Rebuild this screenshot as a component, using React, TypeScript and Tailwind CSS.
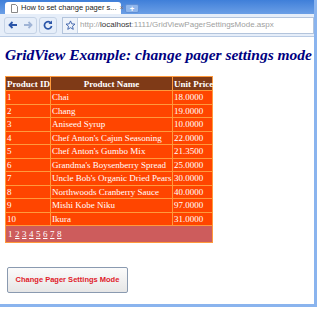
import { FC } from 'react';

type Product = {
	id: number,
	name: string,
	price: string
}

const products: Product[] = [
	{ id: 1, name: 'Chai', price: '18.0000' },
	{ id: 2, name: 'Chang', price: '19.0000' },
	{ id: 3, name: 'Aniseed Syrup', price: '10.0000' },
	{ id: 4, name: "Chef Anton's Cajun Seasoning", price: '22.0000' },
	{ id: 5, name: "Chef Anton's Gumbo Mix", price: '21.3500' },
	{ id: 6, name: "Grandma's Boysenberry Spread", price: '25.0000' },
	{ id: 7, name: "Uncle Bob's Organic Dried Pears", price: '30.0000' },
	{ id: 8, name: 'Northwoods Cranberry Sauce', price: '40.0000' },
	{ id: 9, name: 'Mishi Kobe Niku', price: '97.0000' },
	{ id: 10, name: 'Ikura', price: '31.0000' },
]

const serif = "font-['Liberation_Serif','Times_New_Roman',serif]"
const sans = "font-['Liberation_Sans',Arial,sans-serif]"

const BrowserChrome: FC = () => {
	return (
		<div className="flex flex-col">
			{/* tab strip */}
			<div className="h-[14px] bg-gradient-to-b from-[#3f7fd9] to-[#6b9fe6] flex items-end pl-[5px]">
				<div className="h-[12px] w-[116px] bg-white rounded-t-[3px] flex items-center gap-[3px] px-[6px]">
					<svg width="7" height="9" viewBox="0 0 7 9" className="shrink-0">
						<path d="M0.5 0.5h4l2 2v6h-6z" fill="#fff" stroke="#888" />
					</svg>
					<span className={`${sans} text-[7.5px] text-[#222] leading-none whitespace-nowrap`}>How to set change pager s...</span>
					<span className={`${sans} text-[8px] text-[#777] leading-none ml-auto`}>×</span>
				</div>
				<div className="ml-[4px] mb-[1px] w-[14px] h-[9px] bg-[#8fb6ec] rounded-[2px] border border-[#5f8fd6] flex items-center justify-center text-[8px] leading-none text-white font-bold">+</div>
			</div>
			{/* toolbar */}
			<div className="h-[23px] bg-[#e6eef9] border-b border-[#b9cbe4] flex items-center pl-[4px] gap-[2px]">
				<div className="w-[33px] h-[17px] rounded-[3px] border border-[#c5d3e6] flex items-center justify-around">
					<svg width="10" height="8" viewBox="0 0 10 8"><path d="M9 4H2M4.5 1L1.5 4l3 3" stroke="#2a55a8" strokeWidth="1.8" fill="none" /></svg>
					<svg width="10" height="8" viewBox="0 0 10 8"><path d="M1 4h7M5.5 1l3 3-3 3" stroke="#9fb4d6" strokeWidth="1.8" fill="none" /></svg>
				</div>
				<div className="w-[18px] h-[17px] rounded-[3px] border border-[#c5d3e6] flex items-center justify-center">
					<svg width="10" height="10" viewBox="0 0 10 10"><path d="M8 3.2A3.6 3.6 0 1 0 8.6 6" stroke="#2a55a8" strokeWidth="1.7" fill="none" /><path d="M9 0.5v3.5H5.5z" fill="#2a55a8" /></svg>
				</div>
				<div className="flex-1 h-[17px] bg-white border border-[#b3c4dc] flex items-center ml-[3px]">
					<div className="w-[15px] h-full border-r border-[#c5d3e6] flex items-center justify-center bg-[#eef3fa]">
						<svg width="11" height="11" viewBox="0 0 12 12"><path d="M6 1l1.4 3.2 3.5.3-2.7 2.3.8 3.4L6 8.4 3 10.2l.8-3.4L1.1 4.5l3.5-.3z" fill="none" stroke="#3a5fa8" strokeWidth="1" /></svg>
					</div>
					<span className={`${sans} text-[8px] leading-none text-[#a0a0a0] pl-[2px] whitespace-nowrap`}>http://<span className="text-[#333]">localhost</span>:1111/GridViewPagerSettingsMode.aspx</span>
				</div>
			</div>
		</div>
	)
}

const ProductsGrid: FC = () => {
	return (
		<table className={`${serif} table-fixed w-[207px] border-collapse text-[9px] text-white leading-[12px] border border-[#ff9a3c]`}>
			<colgroup>
				<col className="w-[45px]" />
				<col className="w-[122px]" />
				<col className="w-[40px]" />
			</colgroup>
			<thead>
				<tr className="bg-[#7f3a17] font-bold h-[14px]">
					<th className="border border-[#ff9a3c] px-[1px] text-left whitespace-nowrap">Product ID</th>
					<th className="border border-[#ff9a3c] px-[1px] text-center">Product Name</th>
					<th className="border border-[#ff9a3c] px-[1px] text-left whitespace-nowrap">Unit Price</th>
				</tr>
			</thead>
			<tbody>
				{products.map((p) => (
					<tr key={p.id} className="bg-[#ff4500] h-[13.5px]">
						<td className="border border-[#ff9a3c] px-[1px]">{p.id}</td>
						<td className="border border-[#ff9a3c] px-[1px] whitespace-nowrap">{p.name}</td>
						<td className="border border-[#ff9a3c] px-[1px] whitespace-nowrap">{p.price}</td>
					</tr>
				))}
				<tr className="bg-[#cd5c5c] h-[17px]">
					<td colSpan={3} className="border border-[#ff9a3c] px-[2px]">
						<div className="flex gap-[2.5px]">
							{[1, 2, 3, 4, 5, 6, 7, 8].map((n) => (
								<span key={n} className={n === 1 ? '' : 'underline'}>{n}</span>
							))}
						</div>
					</td>
				</tr>
			</tbody>
		</table>
	)
}

const App: FC = () => {
	return (
		<div className="w-[320px] h-[310px] bg-white overflow-hidden">
			<div className="w-[317px] h-[307px] border-r-[3px] border-b-[3px] border-[#8ab4ee] flex flex-col bg-white">
				<BrowserChrome />
				<div className="flex flex-col px-[5px] pt-[9px]">
					<h2 className={`${serif} italic font-bold text-[15.5px] leading-[18px] text-[#000080] whitespace-nowrap`}>GridView Example: change pager settings mode</h2>
					<div className="mt-[12px]">
						<ProductsGrid />
					</div>
					<button className={`${sans} mt-[24px] ml-[2px] w-[121px] h-[26px] rounded-[2px] border border-[#8a9ab0] bg-gradient-to-b from-[#fbfbfb] to-[#e6e6e6] text-[7.5px] font-bold text-[#e0202a] whitespace-nowrap`}>
						Change Pager Settings Mode
					</button>
				</div>
			</div>
		</div>
	)
}

export default App;
